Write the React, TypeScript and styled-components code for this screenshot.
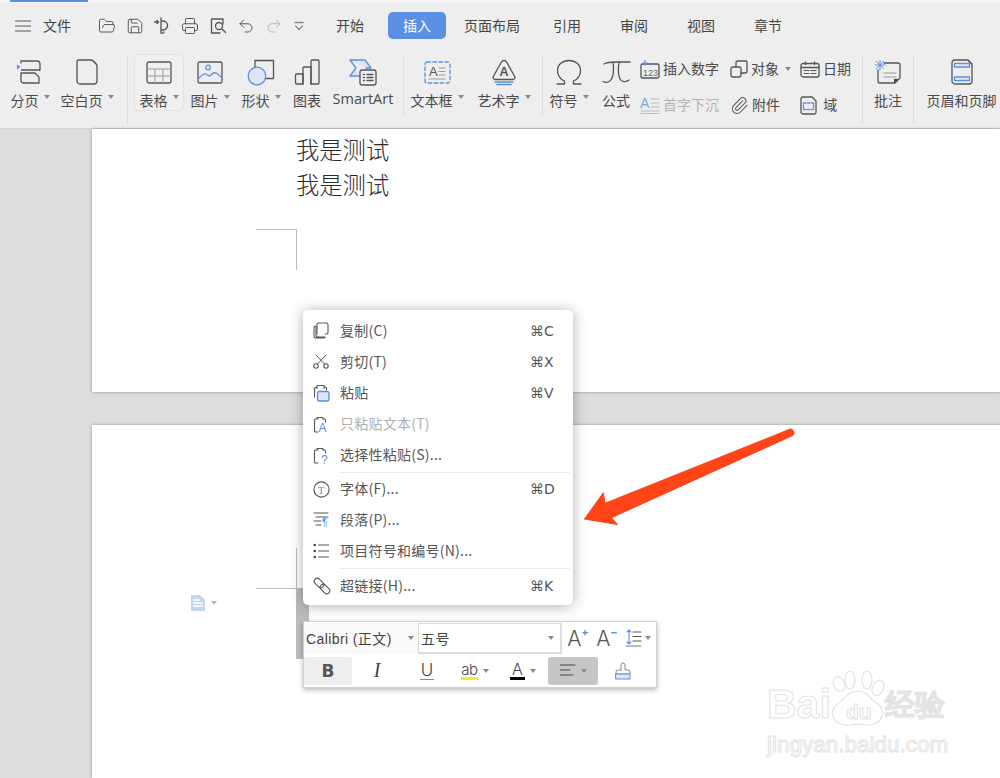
import React from "react";
import styled, { createGlobalStyle } from "styled-components";
import { FolderOpen, Save, Printer, Undo2, Redo2, Paperclip } from "lucide-react";

const GlobalStyle = createGlobalStyle`
  html, body { margin: 0; padding: 0; }
  body { font-family: "Noto Sans CJK SC", "Noto Sans", sans-serif; color: #444; }
  * { box-sizing: border-box; }
`;

const Root = styled.div`
  position: relative;
  width: 1000px;
  height: 778px;
  overflow: hidden;
  background: #dddddd;
  display: flex;
  flex-direction: column;
`;

/* ---------- ribbon ---------- */
const Ribbon = styled.header`
  height: 129px;
  flex: none;
  background: #eeeeee;
  border-bottom: 1px solid #d4d4d4;
`;
const TopStrip = styled.div`
  height: 3px;
  background: #f7f7f9;
  padding-left: 10px;
`;
const LoadBar = styled.div`
  width: 78px;
  height: 2px;
  background: #5b8fe3;
`;
const TabRow = styled.div`
  margin-top: 9px;
  height: 27px;
  padding-left: 15px;
  display: flex;
  align-items: center;
`;
const FileLabel = styled.span`
  font-size: 14px;
  margin: 0 27px 2px 12px;
`;
const Quick = styled.div`
  display: flex;
  align-items: center;
  width: 207px;
  justify-content: space-between;
  margin-right: 16px;
`;
const Tabs = styled.nav`
  display: flex;
  gap: 9px;
`;
const Tab = styled.div<{ $active?: boolean; $w?: number }>`
  width: ${(p) => p.$w ?? 58}px;
  height: 27px;
  line-height: 27px;
  text-align: center;
  font-size: 14px;
  border-radius: 5px;
  background: ${(p) => (p.$active ? "#5b8fe3" : "transparent")};
  color: ${(p) => (p.$active ? "#fff" : "#444")};
`;
const ToolRow = styled.div`
  margin-top: 15px;
  padding-left: 4px;
  display: flex;
  align-items: flex-start;
`;
const ToolButton = styled.div<{ $w: number; $on?: boolean }>`
  width: ${(p) => p.$w}px;
  flex: none;
  height: 57px;
  padding-top: 4px;
  display: flex;
  flex-direction: column;
  align-items: center;
  border-radius: 4px;
  border: ${(p) => (p.$on ? "1px solid #e2e2e2" : "none")};
  background: ${(p) => (p.$on ? "#f0f0f0" : "transparent")};
`;
const IconSlot = styled.div`
  height: 28px;
  display: flex;
  align-items: center;
  justify-content: center;
`;
const ToolLabel = styled.div`
  margin-top: 4px;
  height: 20px;
  line-height: 20px;
  font-size: 14px;
  white-space: nowrap;
  display: flex;
  align-items: center;
  color: #4a4a4a;
`;
const LatinLabel = styled(ToolLabel)`
  font-family: "Open Sans", sans-serif;
  font-size: 14.500px;
  margin-top: 3px;
`;
const Caret = styled.i`
  width: 0;
  height: 0;
  margin-left: 5px;
  margin-bottom: 6px;
  border-left: 3.500px solid transparent;
  border-right: 3.500px solid transparent;
  border-top: 4px solid #8a8a8a;
`;
const Sep = styled.div<{ $left: number; $right?: number; $h?: number }>`
  width: 1px;
  flex: none;
  height: ${(p) => p.$h ?? 69}px;
  margin: 1px ${(p) => p.$right ?? 0}px 0 ${(p) => p.$left}px;
  background: #dcdcdc;
`;
const SmallColumn = styled.div<{ $w: number; $left?: number }>`
  width: ${(p) => p.$w}px;
  margin-left: ${(p) => p.$left ?? 0}px;
  flex: none;
  padding-top: 1px;
  display: flex;
  flex-direction: column;
  gap: 8px;
`;
const SmallTool = styled.div<{ $off?: boolean }>`
  height: 28px;
  display: flex;
  align-items: center;
  gap: 3px;
  font-size: 14px;
  white-space: nowrap;
  color: ${(p) => (p.$off ? "#b4b4b4" : "#4a4a4a")};
`;
const SmallText = styled.span`
  margin-bottom: 2px;
`;
const SmallCaret = styled(Caret)`
  margin-left: 3px;
  margin-bottom: 0;
`;

/* ---------- icons ---------- */
const Ico = styled.svg`
  display: block;
  flex: none;
  fill: none;
  stroke: #555;
  stroke-width: 1.3;
  stroke-linecap: round;
  stroke-linejoin: round;
  .blue { stroke: #5b8fe3; }
  .soft { stroke: #9a9a9a; stroke-width: 1; }
  .fillblue { fill: #5b8fe3; stroke: none; }
  .tint { fill: #dfe5f2; }
  .dark { fill: #444; stroke: none; }
  text { font-family: "Liberation Sans", sans-serif; stroke: none; }
`;
const s = (w: number, h: number) => ({ width: w, height: h, viewBox: `0 0 ${w} ${h}` });

const MenuLines = () => (
  <Ico {...s(16, 14)}><path d="M0 2h16M0 7h16M0 12h16" stroke="#888" strokeWidth="1.6" /></Ico>
);
const PainterQuick = () => (
  <Ico {...s(17, 18)}>
    <path d="M7 4.500a4.500 4.500 0 1 1 2 8.500H7.500M7 1v15M7 16a2 2 0 0 0 3-1" />
    <path d="M0.500 5h4l-1.500-1.500M4.500 5 3 6.500" />
  </Ico>
);
const PreviewQuick = () => (
  <Ico {...s(17, 16)}>
    <path d="M10 15H1.500V1H13v5" />
    <circle cx="9" cy="8" r="3.500" />
    <path d="m12 11 3.500 3.500" />
  </Ico>
);
const MoreQuick = () => (
  <Ico {...s(12, 10)}>
    <path d="M2 1.500h8" stroke="#888" /><path d="m2.500 5 3.500 3.500L9.500 5" stroke="#888" />
  </Ico>
);
const SplitIcon = () => (
  <Ico {...s(26, 26)}>
    <path d="M3 2h16a3 3 0 0 1 3 3v6H3.500M3 2v2" transform="translate(1 0)" />
    <path d="M4 14h13l4 4v6H5a3 3 0 0 1-2-2v-8z" transform="translate(1 0)" />
    <path d="M0 5.500v5l3.500-2.500z" className="fillblue" />
  </Ico>
);
const BlankIcon = () => (
  <Ico {...s(22, 26)}>
    <path d="M3 1h13l5 5v16a3 3 0 0 1-3 3H4a3 3 0 0 1-3-3V3a2 2 0 0 1 2-2z" />
    <path d="M16 1h1l4 4v1z" className="dark" />
  </Ico>
);
const TableIcon = () => (
  <Ico {...s(26, 23)}>
    <rect x="1" y="1" width="24" height="21" rx="2" />
    <path d="M1.500 8h23M1.500 15h23M9 8v14M17 8v14" className="soft" />
  </Ico>
);
const PictureIcon = () => (
  <Ico {...s(26, 23)}>
    <rect x="1" y="1" width="24" height="21" rx="1.500" />
    <circle cx="11" cy="6.500" r="2.300" className="blue" />
    <path d="M2 17c3-3 5-5 7-4s3 3 5 1 3-3 5-2 4 3 6 5" className="blue" />
  </Ico>
);
const ShapeIcon = () => (
  <Ico {...s(28, 27)}>
    <path d="M8 1.500h18.500v18h-7" /><path d="M8 1.500v7" />
    <circle cx="10" cy="17" r="8.800" className="blue tint" />
  </Ico>
);
const ChartIcon = () => (
  <Ico {...s(26, 26)}>
    <path d="M1.500 16a1 1 0 0 1 1-1H9v10H2.500a1 1 0 0 1-1-1z" />
    <path d="M9 25V9a1 1 0 0 1 1-1h7v17" />
    <path d="M17 25V2a1 1 0 0 1 1-1h6a1 1 0 0 1 1 1v22a1 1 0 0 1-1 1z" />
  </Ico>
);
const SmartArtIcon = () => (
  <Ico {...s(28, 27)}>
    <path d="M1 1h15l6 8h-5M1 1l6 8-6 8h10" className="blue tint" />
    <rect x="11" y="11" width="16" height="15" rx="2" fill="#efefef" />
    <path d="M14.500 15.500h1M18 15.500h6M14.500 18.500h1M18 18.500h6M14.500 21.500h1M18 21.500h6" />
  </Ico>
);
const TextBoxIcon = () => (
  <Ico {...s(27, 23)}>
    <rect x="1" y="1" width="25" height="21" rx="2" className="blue" strokeDasharray="3.500 2.500" />
    <text x="5" y="15" fontSize="13" fill="#555">A</text>
    <path d="M15 7h6M15 10.500h6M15 14h6" className="soft" /><path d="M5 18h16" className="soft" />
  </Ico>
);
const WordArtIcon = () => (
  <Ico {...s(26, 27)}>
    <path d="M13 1.500h0c1 0 2 .5 2.500 1.500l8 14c1 2 0 3.500-2 3.500h-17c-2 0-3-1.500-2-3.500l8-14c.5-1 1.500-1.500 2.500-1.500z" />
    <text x="8.500" y="16.500" fontSize="12.500" fontWeight="700" fill="#555">A</text>
    <path d="M4 23h18M6 25.500h14" className="blue" strokeWidth="1.500" />
  </Ico>
);
const OmegaIcon = () => (
  <Ico {...s(28, 26)}>
    <path d="M2 25h7.500v-3C5 20 2.500 16 2.500 11.500 2.500 5.500 7.500 1.500 14 1.500s11.500 4 11.500 10c0 4.500-2.500 8.500-7 10.500v3H26" />
  </Ico>
);
const PiIcon = () => (
  <Ico {...s(29, 24)}>
    <path d="M2 4c3-2 8-2 13-2h13" /><path d="M11 2c1 8 0 16-3 19-2 1.500-5 1.500-7 .5" />
    <path d="M17 2c-1 7-1 13 1 17 1.500 3 6 3.500 9 1" />
  </Ico>
);
const Insert123Icon = () => (
  <Ico {...s(20, 19)}>
    <rect x="1" y="4" width="18" height="14" rx="1.500" />
    <path d="M5 0v4.500M3 3l2 2 2-2" className="blue" />
    <text x="3" y="15.500" fontSize="9" fill="#666">123</text>
  </Ico>
);
const DropCapIcon = () => (
  <Ico {...s(20, 18)}>
    <text x="0" y="12" fontSize="14" fill="#7ea7ea">A</text>
    <path d="M11 3h8M11 7h8M11 11h8M1 15h18" stroke="#bbb" strokeWidth="1" />
    <path d="M1 17.500h18" stroke="#bbb" strokeWidth="1" />
  </Ico>
);
const ObjectIcon = () => (
  <Ico {...s(18, 18)}>
    <path d="M6 7V3a2 2 0 0 1 2-2h8a1 1 0 0 1 1 1v9a2 2 0 0 1-2 2h-4" />
    <rect x="1" y="7" width="10" height="10" rx="1.500" />
  </Ico>
);
const CalendarIcon = () => (
  <Ico {...s(20, 17)}>
    <rect x="1" y="2.500" width="18" height="13.500" rx="2" />
    <path d="M1 6.500h18M5.500 1v2.500M14.500 1v2.500" />
    <path d="M4 9.500h5M11 9.500h5M4 12.500h5M11 12.500h5" strokeWidth="1" />
  </Ico>
);
const FieldIcon = () => (
  <Ico {...s(17, 19)}>
    <path d="M3 1h9l4 4v11a2 2 0 0 1-2 2H3a2 2 0 0 1-2-2V3a2 2 0 0 1 2-2z" />
    <rect x="3.500" y="7" width="10" height="6.500" className="blue" strokeDasharray="2.500 1.500" />
  </Ico>
);
const NoteIcon = () => (
  <Ico {...s(26, 25)}>
    <path d="M9 3h14a2 2 0 0 1 2 2v13l-5 5H5a2 2 0 0 1-2-2V10" />
    <path d="M19 23v-4h5z" className="dark" />
    <path d="M9 13h12M9 17h12" className="soft" />
    <path d="M5 0v10M0 5h10M1.500 1.500l7 7M8.500 1.500l-7 7" className="blue" strokeWidth="1" />
  </Ico>
);
const HeaderIcon = () => (
  <Ico {...s(22, 26)}>
    <path d="M4 1h13l4 4v17a3 3 0 0 1-3 3H4a3 3 0 0 1-3-3V4a3 3 0 0 1 3-3z" />
    <path d="M17 1l4 4v1l-5-5z" className="dark" />
    <rect x="3.500" y="4.500" width="15" height="3.500" className="blue" />
    <rect x="3.500" y="18" width="15" height="3.500" className="blue" />
  </Ico>
);

const CopyIcon = () => (
  <Ico {...s(16, 17)}>
    <path d="M4 12V2.500A1.500 1.500 0 0 1 5.500 1h8A1.500 1.500 0 0 1 15 2.500v8a1.500 1.500 0 0 1-1.500 1.500H12" strokeWidth="1.100" />
    <path d="M1 6a2 2 0 0 1 2-2h0v9a2 2 0 0 0 2 2h7v0a1 1 0 0 1-1 1H3a2 2 0 0 1-2-2z" strokeWidth="1.100" />
  </Ico>
);
const ScissorsIcon = () => (
  <Ico {...s(16, 15)}>
    <circle cx="3" cy="12" r="2.200" strokeWidth="1.100" /><circle cx="13" cy="12" r="2.200" strokeWidth="1.100" />
    <path d="M4.500 10 13 1M11.500 10 3 1" strokeWidth="1" />
  </Ico>
);
const Board = () => <path d="M5 4H2.500a1 1 0 0 0-1 1v11a1 1 0 0 0 1 1H5M4 4V2.500h6V4" strokeWidth="1.100" />;
const PasteIcon = () => (
  <Ico {...s(17, 18)}>
    <path d="M4 3.500H2.500a1 1 0 0 0-1 1V13M4 4.500V1.500h7v3M11 3h1.500a1 1 0 0 1 1 1v2" strokeWidth="1.100" />
    <rect x="4.500" y="7.500" width="11.500" height="9.500" rx="2" className="blue tint" />
  </Ico>
);
const PasteTextIcon = () => (
  <Ico width="17" height="24" viewBox="0 -3 17 24">
    <Board />
    <path d="M10 4h1.500a1 1 0 0 1 1 1v2" strokeWidth="1.100" />
    <text x="5.500" y="17" fontSize="12" fill="#5b8fe3">A</text>
  </Ico>
);
const PasteSpecialIcon = () => (
  <Ico width="17" height="24" viewBox="0 -3 17 24">
    <Board />
    <path d="M10 4h1.500a1 1 0 0 1 1 1v2" strokeWidth="1.100" />
    <text x="8" y="17.500" fontSize="12" fill="#5b8fe3">?</text>
  </Ico>
);
const FontIcon = () => (
  <Ico {...s(17, 17)}>
    <circle cx="8.500" cy="8.500" r="7.600" strokeWidth="1.100" />
    <text x="4.800" y="12.700" fontSize="11" fill="#5b8fe3" style={{ fontFamily: "Liberation Serif" }}>T</text>
  </Ico>
);
const ParagraphIcon = () => (
  <Ico {...s(16, 16)}>
    <path d="M1 1h14M3 5h12M1 9h7M3 13h5" strokeWidth="1" />
    <text x="9" y="14" fontSize="10" fill="#5b8fe3">¶</text>
  </Ico>
);
const ListIcon = () => (
  <Ico {...s(16, 16)}>
    <circle cx="1.800" cy="2" r="1.300" className="dark" />
    <circle cx="1.800" cy="8" r="1.300" className="dark" />
    <circle cx="1.800" cy="14" r="1.300" className="dark" />
    <path d="M5.500 2H15.500M5.500 8H15.500M5.500 14H15.500" strokeWidth="1.100" />
  </Ico>
);
const LinkIcon = () => (
  <Ico {...s(18, 18)}>
    <rect x="0.500" y="3" width="11" height="6" rx="3" transform="rotate(45 6 6)" strokeWidth="1.100" />
    <rect x="6.500" y="9" width="11" height="6" rx="3" transform="rotate(45 12 12)" strokeWidth="1.100" />
  </Ico>
);
const DocTip = () => (
  <Ico {...s(16, 16)}>
    <path d="M1 0h9l5 5v11H1z" style={{ fill: "#c4d5f2", stroke: "none" }} />
    <path d="M3.500 5h6M3.500 8h9M3.500 11h9" stroke="#fff" />
  </Ico>
);
const LineSpaceIcon = () => (
  <Ico {...s(16, 18)}>
    <path d="M3 1v14M1 3l2-2 2 2M1 13l2 2 2-2" className="blue" strokeWidth="1.100" />
    <path d="M7 3h8M7 7.500h8M7 12h8" strokeWidth="1.100" />
    <path d="M0 17h15" stroke="#777" strokeWidth="1" />
  </Ico>
);
const AlignIcon = () => (
  <Ico {...s(16, 13)}>
    <path d="M0 1h15M0 6h10M0 11h13" stroke="#444" strokeWidth="1" />
  </Ico>
);
const BrushIcon = () => (
  <Ico {...s(16, 18)}>
    <path d="M6 8V3a2 2 0 0 1 4 0v5h3a2 2 0 0 1 2 2v2H1v-2a2 2 0 0 1 2-2z" stroke="#888" strokeWidth="1" />
    <path d="M1 12h14v5H1z" className="blue tint" strokeWidth="1" />
  </Ico>
);

/* ---------- pages ---------- */
const Workspace = styled.main`
  flex: 1;
  padding-left: 92px;
  display: flex;
  flex-direction: column;
  gap: 33px;
`;
const Page = styled.section`
  position: relative;
  background: #fff;
  box-shadow: 0 0 3px rgba(0, 0, 0, 0.35);
`;
const FirstPage = styled(Page)`
  height: 263px;
  flex: none;
  padding: 3px 0 0 204px;
`;
const SecondPage = styled(Page)`
  flex: 1;
`;
const BodyLine = styled.p`
  margin: 0;
  font-size: 23.300px;
  line-height: 35px;
  font-weight: 300;
  color: #2b2b2b;
`;
const CropMark = styled.div<{ $x: number; $y: number; $bottom?: boolean }>`
  position: absolute;
  left: ${(p) => p.$x}px;
  top: ${(p) => p.$y}px;
  width: 41px;
  height: 41px;
  border-right: 1px solid #bdbdbd;
  border-top: ${(p) => (p.$bottom ? "none" : "1px solid #bdbdbd")};
  border-bottom: ${(p) => (p.$bottom ? "1px solid #bdbdbd" : "none")};
`;
const CursorBar = styled.div`
  position: absolute;
  left: 204px;
  top: 163px;
  width: 13px;
  height: 71px;
  background: #bcbcbc;
`;
const ParaTip = styled.div`
  position: absolute;
  left: 98px;
  top: 170px;
  display: flex;
  align-items: center;
  gap: 5px;
`;
const TipCaret = styled(Caret)`
  margin: 0;
  border-top-color: #b5b5b5;
`;

/* ---------- context menu ---------- */
const Menu = styled.div`
  position: absolute;
  left: 303px;
  top: 310px;
  width: 270px;
  height: 295px;
  padding: 5px 0 0 0;
  background: #fff;
  border-radius: 5px;
  box-shadow: 0 1px 14px rgba(0, 0, 0, 0.32);
`;
const MenuRow = styled.div<{ $off?: boolean }>`
  height: 31px;
  display: flex;
  align-items: center;
  font-size: 14px;
  color: ${(p) => (p.$off ? "#b0b0b0" : "#555")};
`;
const MenuIcon = styled.span`
  width: 37px;
  padding-left: 10px;
  flex: none;
  display: flex;
`;
const MenuText = styled.span`
  flex: 1;
  margin-bottom: 2px;
  letter-spacing: 0.250px;
`;
const Shortcut = styled.span`
  width: 43px;
  flex: none;
  font-family: "DejaVu Sans", sans-serif;
  font-size: 14px;
  color: #555;
`;
const MenuDivider = styled.div`
  height: 1px;
  margin: 1.500px 3px 1px 37px;
  background: #ececec;
`;

/* ---------- mini toolbar ---------- */
const MiniBar = styled.div`
  position: absolute;
  left: 303px;
  top: 621px;
  width: 354px;
  height: 67px;
  background: #fff;
  border: 1px solid #d0d0d0;
  box-shadow: 0 2px 5px rgba(0, 0, 0, 0.28);
  display: flex;
  flex-direction: column;
`;
const MiniRow = styled.div`
  height: 33px;
  display: flex;
  align-items: center;
`;
const FontCombo = styled.div`
  width: 114px;
  height: 31px;
  padding: 0 4px 0 2px;
  display: flex;
  align-items: center;
  justify-content: space-between;
  background: #f9f9f9;
  font-family: "Liberation Sans", "Noto Sans CJK SC", sans-serif;
  font-size: 14px;
  letter-spacing: 0.400px;
  white-space: nowrap;
  color: #444;
`;
const SizeCombo = styled(FontCombo)`
  width: 144px;
  background: #fff;
  border: 1px solid #dcdcdc;
  border-width: 1px 2px 2px 1px;
  padding: 0 6px 0 2px;
  font-family: "Noto Sans CJK SC", sans-serif;
`;
const ComboCaret = styled(Caret)`
  margin: 0;
`;
const GrowFont = styled.div<{ $w: number }>`
  width: ${(p) => p.$w}px;
  flex: none;
  display: flex;
  align-items: center;
  justify-content: center;
  font-family: "Inter", "Liberation Sans", sans-serif;
  font-size: 21px;
  font-weight: 300;
  color: #555;
`;
const Sup = styled.sup`
  font-size: 11px;
  line-height: 0;
  margin-bottom: 12px;
  color: #5b8fe3;
  font-weight: 700;
`;
const FormatButton = styled.div<{ $w: number; $tone?: string }>`
  width: ${(p) => p.$w}px;
  height: 28px;
  flex: none;
  border-radius: 3px;
  display: flex;
  align-items: center;
  justify-content: center;
  gap: 5px;
  background: ${(p) => p.$tone ?? "transparent"};
  font-family: "Inter", "Liberation Sans", sans-serif;
  color: #444;
`;
const BoldMark = styled.span`
  font-size: 17px;
  font-weight: 700;
  font-family: "DejaVu Sans", sans-serif;
  color: #555;
`;
const ItalicMark = styled.span`
  font-size: 20px;
  font-style: italic;
  font-family: "Liberation Serif", serif;
`;
const UnderMark = styled.span`
  font-size: 17px;
  font-weight: 300;
  line-height: 18px;
  border-bottom: 1px solid #5b8fe3;
  padding: 0 1px;
`;
const HighlightMark = styled.span`
  font-size: 15px;
  font-weight: 300;
  line-height: 15px;
  letter-spacing: -0.500px;
  border-bottom: 3px solid #f5ec1e;
`;
const ColorMark = styled.span`
  font-size: 16px;
  font-weight: 300;
  line-height: 15px;
  padding: 0 2px;
  border-bottom: 3px solid #000;
`;

/* ---------- annotation overlays ---------- */
const ArrowLayer = styled.svg`
  position: absolute;
  left: 580px;
  top: 425px;
`;
const Watermark = styled.div`
  position: absolute;
  left: 767px;
  top: 670px;
  width: 190px;
  color: #fff;
  -webkit-text-stroke: 1px #e3e3e3;
  font-family: "Liberation Sans", sans-serif;
`;
const MarkTop = styled.div`
  display: flex;
  align-items: flex-end;
`;
const MarkBai = styled.span`
  font-size: 41px;
  font-weight: 700;
  line-height: 49px;
`;
const MarkCn = styled.span`
  font-size: 30px;
  font-weight: 700;
  line-height: 49px;
  margin-left: -1px;
`;
const MarkUrl = styled.div`
  font-size: 22.500px;
  line-height: 26px;
  margin-top: 3px;
  white-space: nowrap;
`;
const Paw = styled.svg`
  fill: #fff;
  stroke: #e3e3e3;
  stroke-width: 1.200;
  flex: none;
  margin: 0 0 1px -1px;
  text {
    font-family: "Liberation Sans", sans-serif;
    font-weight: 700;
    font-size: 21px;
    fill: #fff;
    stroke: #e3e3e3;
    stroke-width: 1;
  }
`;

const tabs = [
  { t: "开始" },
  { t: "插入", active: true },
  { t: "页面布局", w: 74 },
  { t: "引用" },
  { t: "审阅" },
  { t: "视图" },
  { t: "章节" },
];

const quickProps = { size: 18, strokeWidth: 1.3, color: "#555" };

export default function App() {
  return (
    <Root>
      <GlobalStyle />
      <Ribbon>
        <TopStrip><LoadBar /></TopStrip>
        <TabRow>
          <MenuLines />
          <FileLabel>文件</FileLabel>
          <Quick>
            <FolderOpen {...quickProps} />
            <Save {...quickProps} />
            <PainterQuick />
            <Printer {...quickProps} />
            <PreviewQuick />
            <Undo2 {...quickProps} />
            <Redo2 {...quickProps} color="#b5b5b5" />
            <MoreQuick />
          </Quick>
          <Tabs>
            {tabs.map((tab) => (
              <Tab key={tab.t} $active={tab.active} $w={tab.w}>{tab.t}</Tab>
            ))}
          </Tabs>
        </TabRow>
        <ToolRow>
          <ToolButton $w={52}><IconSlot><SplitIcon /></IconSlot><ToolLabel>分页<Caret /></ToolLabel></ToolButton>
          <ToolButton $w={62}><IconSlot><BlankIcon /></IconSlot><ToolLabel>空白页<Caret /></ToolLabel></ToolButton>
          <Sep $left={9} $right={6} />
          <ToolButton $w={50} $on><IconSlot><TableIcon /></IconSlot><ToolLabel>表格<Caret /></ToolLabel></ToolButton>
          <ToolButton $w={52}><IconSlot><PictureIcon /></IconSlot><ToolLabel>图片<Caret /></ToolLabel></ToolButton>
          <ToolButton $w={50}><IconSlot><ShapeIcon /></IconSlot><ToolLabel>形状<Caret /></ToolLabel></ToolButton>
          <ToolButton $w={42}><IconSlot><ChartIcon /></IconSlot><ToolLabel>图表</ToolLabel></ToolButton>
          <ToolButton $w={70}><IconSlot><SmartArtIcon /></IconSlot><LatinLabel>SmartArt</LatinLabel></ToolButton>
          <Sep $left={5} $h={60} />
          <ToolButton $w={66}><IconSlot><TextBoxIcon /></IconSlot><ToolLabel>文本框<Caret /></ToolLabel></ToolButton>
          <ToolButton $w={68}><IconSlot><WordArtIcon /></IconSlot><ToolLabel>艺术字<Caret /></ToolLabel></ToolButton>
          <Sep $left={4} $h={60} />
          <ToolButton $w={52}><IconSlot><OmegaIcon /></IconSlot><ToolLabel>符号<Caret /></ToolLabel></ToolButton>
          <ToolButton $w={42}><IconSlot><PiIcon /></IconSlot><ToolLabel>公式</ToolLabel></ToolButton>
          <SmallColumn $w={90} $left={3}>
            <SmallTool><Insert123Icon /><SmallText>插入数字</SmallText></SmallTool>
            <SmallTool $off><DropCapIcon /><SmallText>首字下沉</SmallText></SmallTool>
          </SmallColumn>
          <SmallColumn $w={70}>
            <SmallTool><ObjectIcon /><SmallText>对象</SmallText><SmallCaret /></SmallTool>
            <SmallTool><Paperclip size={19} strokeWidth={1.3} color="#555" /><SmallText>附件</SmallText></SmallTool>
          </SmallColumn>
          <SmallColumn $w={62}>
            <SmallTool><CalendarIcon /><SmallText>日期</SmallText></SmallTool>
            <SmallTool><FieldIcon /><SmallText>&nbsp;域</SmallText></SmallTool>
          </SmallColumn>
          <Sep $left={0} />
          <ToolButton $w={50}><IconSlot><NoteIcon /></IconSlot><ToolLabel>批注</ToolLabel></ToolButton>
          <Sep $left={0} />
          <ToolButton $w={95}><IconSlot><HeaderIcon /></IconSlot><ToolLabel>页眉和页脚</ToolLabel></ToolButton>
        </ToolRow>
      </Ribbon>

      <Workspace>
        <FirstPage>
          <BodyLine>我是测试</BodyLine>
          <BodyLine>我是测试</BodyLine>
          <CropMark $x={164} $y={100} />
        </FirstPage>
        <SecondPage>
          <CropMark $x={164} $y={123} $bottom />
          <CursorBar />
          <ParaTip><DocTip /><TipCaret /></ParaTip>
        </SecondPage>
      </Workspace>

      <Menu>
        <MenuRow><MenuIcon><CopyIcon /></MenuIcon><MenuText>复制(C)</MenuText><Shortcut>⌘C</Shortcut></MenuRow>
        <MenuRow><MenuIcon><ScissorsIcon /></MenuIcon><MenuText>剪切(T)</MenuText><Shortcut>⌘X</Shortcut></MenuRow>
        <MenuRow><MenuIcon><PasteIcon /></MenuIcon><MenuText>粘贴</MenuText><Shortcut>⌘V</Shortcut></MenuRow>
        <MenuRow $off><MenuIcon><PasteTextIcon /></MenuIcon><MenuText>只粘贴文本(T)</MenuText></MenuRow>
        <MenuRow><MenuIcon><PasteSpecialIcon /></MenuIcon><MenuText>选择性粘贴(S)...</MenuText></MenuRow>
        <MenuDivider />
        <MenuRow><MenuIcon><FontIcon /></MenuIcon><MenuText>字体(F)...</MenuText><Shortcut>⌘D</Shortcut></MenuRow>
        <MenuRow><MenuIcon><ParagraphIcon /></MenuIcon><MenuText>段落(P)...</MenuText></MenuRow>
        <MenuRow><MenuIcon><ListIcon /></MenuIcon><MenuText>项目符号和编号(N)...</MenuText></MenuRow>
        <MenuDivider />
        <MenuRow><MenuIcon><LinkIcon /></MenuIcon><MenuText>超链接(H)...</MenuText><Shortcut>⌘K</Shortcut></MenuRow>
      </Menu>

      <MiniBar>
        <MiniRow>
          <FontCombo>Calibri (正文)<ComboCaret /></FontCombo>
          <SizeCombo>五号<ComboCaret /></SizeCombo>
          <GrowFont $w={32}>A<Sup>+</Sup></GrowFont>
          <GrowFont $w={26}>A<Sup>−</Sup></GrowFont>
          <GrowFont $w={36}><LineSpaceIcon /><SmallCaret /></GrowFont>
        </MiniRow>
        <MiniRow>
          <FormatButton $w={48} $tone="#eeeeee"><BoldMark>B</BoldMark></FormatButton>
          <FormatButton $w={50}><ItalicMark>I</ItalicMark></FormatButton>
          <FormatButton $w={50}><UnderMark>U</UnderMark></FormatButton>
          <FormatButton $w={46}><HighlightMark>ab</HighlightMark><ComboCaret /></FormatButton>
          <FormatButton $w={50}><ColorMark>A</ColorMark><ComboCaret /></FormatButton>
          <FormatButton $w={50} $tone="#c6c6c6"><AlignIcon /><ComboCaret /></FormatButton>
          <FormatButton $w={50}><BrushIcon /></FormatButton>
        </MiniRow>
      </MiniBar>

      <ArrowLayer width="216" height="104" viewBox="0 0 216 104">
        <path
          d="M208 5 4.500 94 37.500 99.500 31.500 92.700 212.700 10.500a3 3 0 0 0-4.700-5.500zM4.500 94 23.300 67.700 25 78.300 208 5"
          fill="#ff4517"
          stroke="#ff4517"
          strokeLinejoin="round"
          strokeWidth="1"
        />
      </ArrowLayer>

      <Watermark>
        <MarkTop>
          <MarkBai>Bai</MarkBai>
          <Paw width="56" height="58" viewBox="0 0 56 58">
            <ellipse cx="9" cy="14" rx="5.500" ry="7.500" transform="rotate(-25 9 14)" />
            <ellipse cx="20" cy="10" rx="5" ry="9" />
            <ellipse cx="37" cy="10" rx="5" ry="9" />
            <ellipse cx="48" cy="18" rx="5.500" ry="8" transform="rotate(25 48 18)" />
            <path d="M28 21c8 0 11 6 16 10 7 5 10 9 8 15-2 7-10 10-16 9-5-1-11-1-16 0-7 1-15-2-17-9-2-6 2-11 8-15 6-5 9-10 17-10z" />
            <text x="16" y="49">du</text>
          </Paw>
          <MarkCn>经验</MarkCn>
        </MarkTop>
        <MarkUrl>jingyan.baidu.com</MarkUrl>
      </Watermark>
    </Root>
  );
}
